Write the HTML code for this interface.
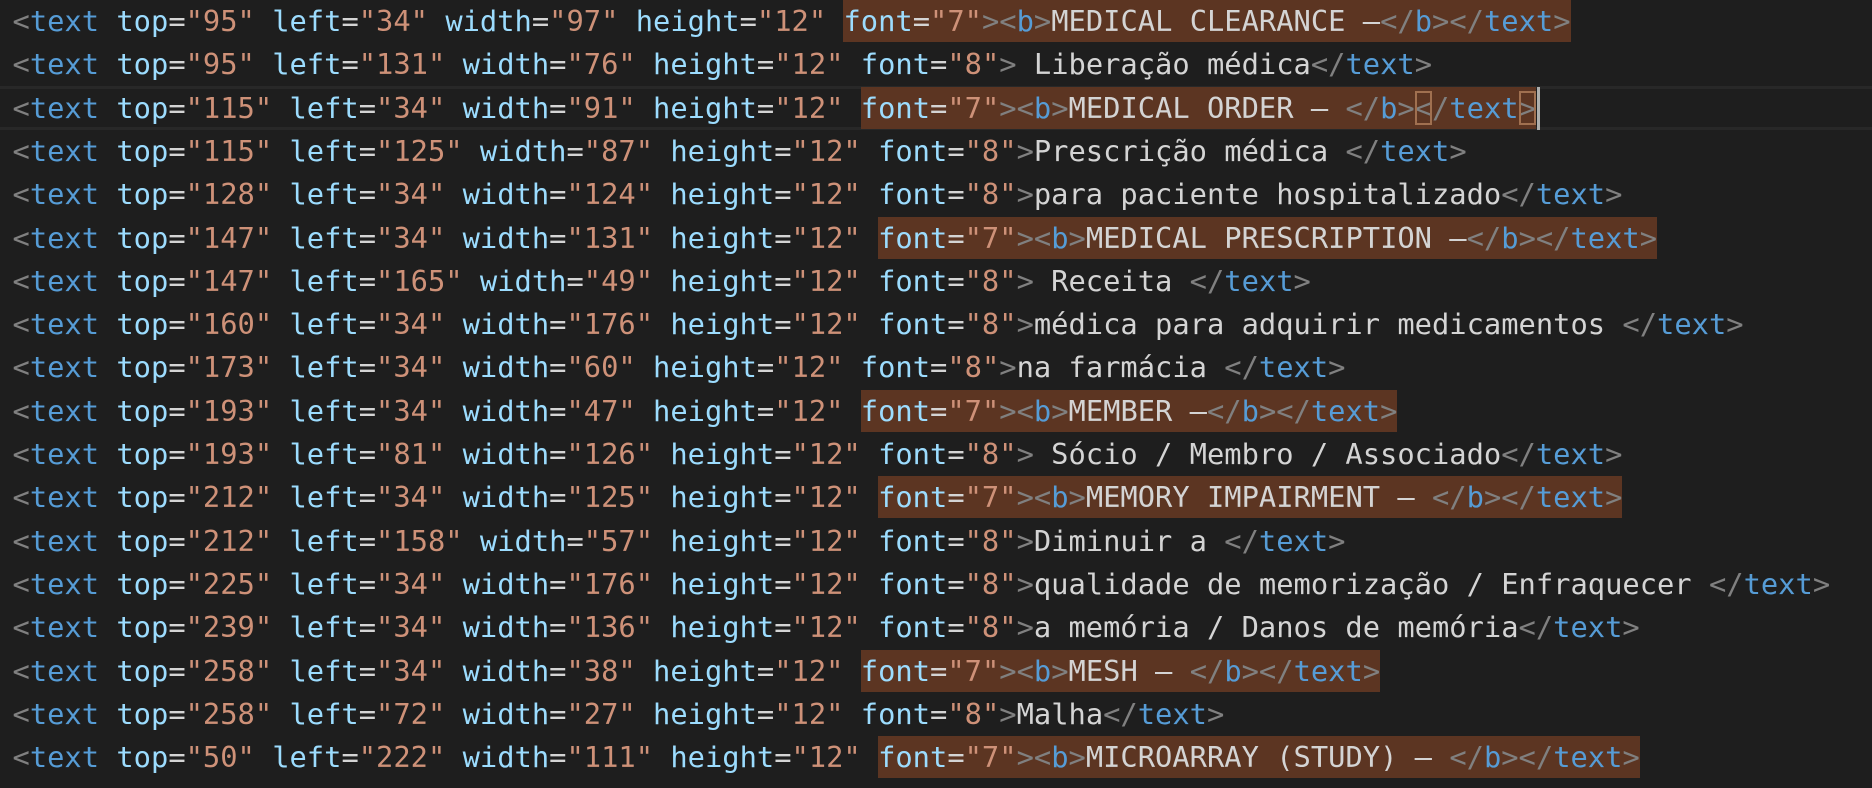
<!DOCTYPE html>
<html><head><meta charset="utf-8"><style>
html,body{margin:0;padding:0;background:#1e1e1e;width:1872px;height:788px;overflow:hidden}
.wrap{position:relative;width:1872px;height:788px;overflow:hidden;background:#1e1e1e}
.ed{position:absolute;left:0;top:0;width:1872px;height:788px;font-family:"DejaVu Sans Mono","Liberation Mono",monospace;font-size:28.75px;white-space:pre;color:#d4d4d4}
.l{position:absolute;left:12.5px;height:43.3px;line-height:43.3px}
.p{color:#808080}.t{color:#569cd6}.a{color:#9cdcfe}.v{color:#ce9178}.e{color:#d4d4d4}
.h{background:#5c3522;display:inline-block;height:42px;line-height:43.3px;vertical-align:top}
.cur{position:absolute;left:0;width:1872px;top:86px;height:38px;border-top:3px solid #282828;border-bottom:3px solid #282828}
.bx{outline:2px solid #a07050;outline-offset:-2px}
.caret{position:absolute;left:1537px;top:87px;width:3px;height:43px;background:#aeafad}
</style></head><body><div class="wrap">
<div class="cur"></div>
<div class="ed">
<div class="l" style="top:0px"><span class="p">&lt;</span><span class="t">text</span> <span class="a">top</span><span class="e">=</span><span class="v">"95"</span> <span class="a">left</span><span class="e">=</span><span class="v">"34"</span> <span class="a">width</span><span class="e">=</span><span class="v">"97"</span> <span class="a">height</span><span class="e">=</span><span class="v">"12"</span> <span class="h"><span class="a">font</span><span class="e">=</span><span class="v">"7"</span><span class="p">&gt;&lt;</span><span class="t">b</span><span class="p">&gt;</span>MEDICAL CLEARANCE –<span class="p">&lt;/</span><span class="t">b</span><span class="p">&gt;&lt;/</span><span class="t">text</span><span class="p">&gt;</span></span></div>
<div class="l" style="top:43.3px"><span class="p">&lt;</span><span class="t">text</span> <span class="a">top</span><span class="e">=</span><span class="v">"95"</span> <span class="a">left</span><span class="e">=</span><span class="v">"131"</span> <span class="a">width</span><span class="e">=</span><span class="v">"76"</span> <span class="a">height</span><span class="e">=</span><span class="v">"12"</span> <span class="a">font</span><span class="e">=</span><span class="v">"8"</span><span class="p">&gt;</span> Liberação médica<span class="p">&lt;/</span><span class="t">text</span><span class="p">&gt;</span></div>
<div class="l" style="top:86.6px"><span class="p">&lt;</span><span class="t">text</span> <span class="a">top</span><span class="e">=</span><span class="v">"115"</span> <span class="a">left</span><span class="e">=</span><span class="v">"34"</span> <span class="a">width</span><span class="e">=</span><span class="v">"91"</span> <span class="a">height</span><span class="e">=</span><span class="v">"12"</span> <span class="h"><span class="a">font</span><span class="e">=</span><span class="v">"7"</span><span class="p">&gt;&lt;</span><span class="t">b</span><span class="p">&gt;</span>MEDICAL ORDER – <span class="p">&lt;/</span><span class="t">b</span><span class="p">&gt;<span class="bx">&lt;</span>/</span><span class="t">text</span><span class="p bx">&gt;</span></span></div>
<div class="l" style="top:129.9px"><span class="p">&lt;</span><span class="t">text</span> <span class="a">top</span><span class="e">=</span><span class="v">"115"</span> <span class="a">left</span><span class="e">=</span><span class="v">"125"</span> <span class="a">width</span><span class="e">=</span><span class="v">"87"</span> <span class="a">height</span><span class="e">=</span><span class="v">"12"</span> <span class="a">font</span><span class="e">=</span><span class="v">"8"</span><span class="p">&gt;</span>Prescrição médica <span class="p">&lt;/</span><span class="t">text</span><span class="p">&gt;</span></div>
<div class="l" style="top:173.2px"><span class="p">&lt;</span><span class="t">text</span> <span class="a">top</span><span class="e">=</span><span class="v">"128"</span> <span class="a">left</span><span class="e">=</span><span class="v">"34"</span> <span class="a">width</span><span class="e">=</span><span class="v">"124"</span> <span class="a">height</span><span class="e">=</span><span class="v">"12"</span> <span class="a">font</span><span class="e">=</span><span class="v">"8"</span><span class="p">&gt;</span>para paciente hospitalizado<span class="p">&lt;/</span><span class="t">text</span><span class="p">&gt;</span></div>
<div class="l" style="top:216.5px"><span class="p">&lt;</span><span class="t">text</span> <span class="a">top</span><span class="e">=</span><span class="v">"147"</span> <span class="a">left</span><span class="e">=</span><span class="v">"34"</span> <span class="a">width</span><span class="e">=</span><span class="v">"131"</span> <span class="a">height</span><span class="e">=</span><span class="v">"12"</span> <span class="h"><span class="a">font</span><span class="e">=</span><span class="v">"7"</span><span class="p">&gt;&lt;</span><span class="t">b</span><span class="p">&gt;</span>MEDICAL PRESCRIPTION –<span class="p">&lt;/</span><span class="t">b</span><span class="p">&gt;&lt;/</span><span class="t">text</span><span class="p">&gt;</span></span></div>
<div class="l" style="top:259.8px"><span class="p">&lt;</span><span class="t">text</span> <span class="a">top</span><span class="e">=</span><span class="v">"147"</span> <span class="a">left</span><span class="e">=</span><span class="v">"165"</span> <span class="a">width</span><span class="e">=</span><span class="v">"49"</span> <span class="a">height</span><span class="e">=</span><span class="v">"12"</span> <span class="a">font</span><span class="e">=</span><span class="v">"8"</span><span class="p">&gt;</span> Receita <span class="p">&lt;/</span><span class="t">text</span><span class="p">&gt;</span></div>
<div class="l" style="top:303.1px"><span class="p">&lt;</span><span class="t">text</span> <span class="a">top</span><span class="e">=</span><span class="v">"160"</span> <span class="a">left</span><span class="e">=</span><span class="v">"34"</span> <span class="a">width</span><span class="e">=</span><span class="v">"176"</span> <span class="a">height</span><span class="e">=</span><span class="v">"12"</span> <span class="a">font</span><span class="e">=</span><span class="v">"8"</span><span class="p">&gt;</span>médica para adquirir medicamentos <span class="p">&lt;/</span><span class="t">text</span><span class="p">&gt;</span></div>
<div class="l" style="top:346.4px"><span class="p">&lt;</span><span class="t">text</span> <span class="a">top</span><span class="e">=</span><span class="v">"173"</span> <span class="a">left</span><span class="e">=</span><span class="v">"34"</span> <span class="a">width</span><span class="e">=</span><span class="v">"60"</span> <span class="a">height</span><span class="e">=</span><span class="v">"12"</span> <span class="a">font</span><span class="e">=</span><span class="v">"8"</span><span class="p">&gt;</span>na farmácia <span class="p">&lt;/</span><span class="t">text</span><span class="p">&gt;</span></div>
<div class="l" style="top:389.7px"><span class="p">&lt;</span><span class="t">text</span> <span class="a">top</span><span class="e">=</span><span class="v">"193"</span> <span class="a">left</span><span class="e">=</span><span class="v">"34"</span> <span class="a">width</span><span class="e">=</span><span class="v">"47"</span> <span class="a">height</span><span class="e">=</span><span class="v">"12"</span> <span class="h"><span class="a">font</span><span class="e">=</span><span class="v">"7"</span><span class="p">&gt;&lt;</span><span class="t">b</span><span class="p">&gt;</span>MEMBER –<span class="p">&lt;/</span><span class="t">b</span><span class="p">&gt;&lt;/</span><span class="t">text</span><span class="p">&gt;</span></span></div>
<div class="l" style="top:433px"><span class="p">&lt;</span><span class="t">text</span> <span class="a">top</span><span class="e">=</span><span class="v">"193"</span> <span class="a">left</span><span class="e">=</span><span class="v">"81"</span> <span class="a">width</span><span class="e">=</span><span class="v">"126"</span> <span class="a">height</span><span class="e">=</span><span class="v">"12"</span> <span class="a">font</span><span class="e">=</span><span class="v">"8"</span><span class="p">&gt;</span> Sócio / Membro / Associado<span class="p">&lt;/</span><span class="t">text</span><span class="p">&gt;</span></div>
<div class="l" style="top:476.3px"><span class="p">&lt;</span><span class="t">text</span> <span class="a">top</span><span class="e">=</span><span class="v">"212"</span> <span class="a">left</span><span class="e">=</span><span class="v">"34"</span> <span class="a">width</span><span class="e">=</span><span class="v">"125"</span> <span class="a">height</span><span class="e">=</span><span class="v">"12"</span> <span class="h"><span class="a">font</span><span class="e">=</span><span class="v">"7"</span><span class="p">&gt;&lt;</span><span class="t">b</span><span class="p">&gt;</span>MEMORY IMPAIRMENT – <span class="p">&lt;/</span><span class="t">b</span><span class="p">&gt;&lt;/</span><span class="t">text</span><span class="p">&gt;</span></span></div>
<div class="l" style="top:519.6px"><span class="p">&lt;</span><span class="t">text</span> <span class="a">top</span><span class="e">=</span><span class="v">"212"</span> <span class="a">left</span><span class="e">=</span><span class="v">"158"</span> <span class="a">width</span><span class="e">=</span><span class="v">"57"</span> <span class="a">height</span><span class="e">=</span><span class="v">"12"</span> <span class="a">font</span><span class="e">=</span><span class="v">"8"</span><span class="p">&gt;</span>Diminuir a <span class="p">&lt;/</span><span class="t">text</span><span class="p">&gt;</span></div>
<div class="l" style="top:562.9px"><span class="p">&lt;</span><span class="t">text</span> <span class="a">top</span><span class="e">=</span><span class="v">"225"</span> <span class="a">left</span><span class="e">=</span><span class="v">"34"</span> <span class="a">width</span><span class="e">=</span><span class="v">"176"</span> <span class="a">height</span><span class="e">=</span><span class="v">"12"</span> <span class="a">font</span><span class="e">=</span><span class="v">"8"</span><span class="p">&gt;</span>qualidade de memorização / Enfraquecer <span class="p">&lt;/</span><span class="t">text</span><span class="p">&gt;</span></div>
<div class="l" style="top:606.2px"><span class="p">&lt;</span><span class="t">text</span> <span class="a">top</span><span class="e">=</span><span class="v">"239"</span> <span class="a">left</span><span class="e">=</span><span class="v">"34"</span> <span class="a">width</span><span class="e">=</span><span class="v">"136"</span> <span class="a">height</span><span class="e">=</span><span class="v">"12"</span> <span class="a">font</span><span class="e">=</span><span class="v">"8"</span><span class="p">&gt;</span>a memória / Danos de memória<span class="p">&lt;/</span><span class="t">text</span><span class="p">&gt;</span></div>
<div class="l" style="top:649.5px"><span class="p">&lt;</span><span class="t">text</span> <span class="a">top</span><span class="e">=</span><span class="v">"258"</span> <span class="a">left</span><span class="e">=</span><span class="v">"34"</span> <span class="a">width</span><span class="e">=</span><span class="v">"38"</span> <span class="a">height</span><span class="e">=</span><span class="v">"12"</span> <span class="h"><span class="a">font</span><span class="e">=</span><span class="v">"7"</span><span class="p">&gt;&lt;</span><span class="t">b</span><span class="p">&gt;</span>MESH – <span class="p">&lt;/</span><span class="t">b</span><span class="p">&gt;&lt;/</span><span class="t">text</span><span class="p">&gt;</span></span></div>
<div class="l" style="top:692.8px"><span class="p">&lt;</span><span class="t">text</span> <span class="a">top</span><span class="e">=</span><span class="v">"258"</span> <span class="a">left</span><span class="e">=</span><span class="v">"72"</span> <span class="a">width</span><span class="e">=</span><span class="v">"27"</span> <span class="a">height</span><span class="e">=</span><span class="v">"12"</span> <span class="a">font</span><span class="e">=</span><span class="v">"8"</span><span class="p">&gt;</span>Malha<span class="p">&lt;/</span><span class="t">text</span><span class="p">&gt;</span></div>
<div class="l" style="top:736.1px"><span class="p">&lt;</span><span class="t">text</span> <span class="a">top</span><span class="e">=</span><span class="v">"50"</span> <span class="a">left</span><span class="e">=</span><span class="v">"222"</span> <span class="a">width</span><span class="e">=</span><span class="v">"111"</span> <span class="a">height</span><span class="e">=</span><span class="v">"12"</span> <span class="h"><span class="a">font</span><span class="e">=</span><span class="v">"7"</span><span class="p">&gt;&lt;</span><span class="t">b</span><span class="p">&gt;</span>MICROARRAY (STUDY) – <span class="p">&lt;/</span><span class="t">b</span><span class="p">&gt;&lt;/</span><span class="t">text</span><span class="p">&gt;</span></span></div>
<div class="l" style="top:779.4px"><span class="p">&lt;</span><span class="t">text</span> <span class="a">top</span><span class="e">=</span><span class="v">"50"</span> <span class="a">left</span><span class="e">=</span><span class="v">"222"</span> <span class="a">width</span><span class="e">=</span><span class="v">"106"</span> <span class="a">height</span><span class="e">=</span><span class="v">"12"</span> <span class="a">font</span><span class="e">=</span><span class="v">"8"</span><span class="p">&gt;</span>Microarranjo (estudo)<span class="p">&lt;/</span><span class="t">text</span><span class="p">&gt;</span></div>
</div>
<div class="caret"></div>
</div></body></html>
